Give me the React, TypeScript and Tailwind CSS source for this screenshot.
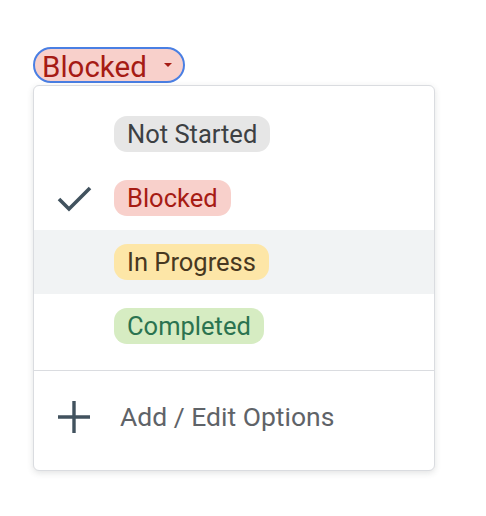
import React from 'react'

const options = [
  { label: 'Not Started', bg: 'bg-[#e6e6e6]', text: 'text-[#3c4043]' },
  { label: 'Blocked', bg: 'bg-[#f8d0cb]', text: 'text-[#a61b14]', checked: true },
  { label: 'In Progress', bg: 'bg-[#fde6a7]', text: 'text-[#473821]', hover: true },
  { label: 'Completed', bg: 'bg-[#d6ecc2]', text: 'text-[#2b7350]' },
]

export default function App() {
  return (
    <div className="min-h-screen bg-white pt-[47px] pl-[33px]" style={{ fontFamily: 'Roboto, "Liberation Sans", sans-serif' }}>
      {/* Trigger chip */}
      <button className="flex h-[36px] w-[152px] items-center rounded-full border-2 border-[#4a7fe3] bg-[#f8d0cb] pl-[7px] text-[29.5px] text-[#a61b14]">
        <span className="pt-[3px] leading-[32px]">Blocked</span>
        <svg className="ml-[16px]" width="10" height="6" viewBox="0 0 10 6">
          <path d="M1 1h8L5 5z" fill="#a61b14" />
        </svg>
      </button>

      {/* Menu */}
      <div className="mt-[2px] w-[402px] rounded-[6px] border border-[#dadce0] bg-white pt-[16px] pb-[21px] shadow-[0_2px_6px_rgba(60,64,67,0.15)]">
        {options.map((o) => (
          <div key={o.label} className={`flex h-[64px] items-center ${o.hover ? 'bg-[#f1f3f4]' : ''}`}>
            <div className="flex w-[80px] justify-center">
              {o.checked && (
                <svg width="36" height="28" viewBox="0 0 36 28">
                  <path d="M3 15l10 10L34 4" fill="none" stroke="#41525e" strokeWidth="3.6" />
                </svg>
              )}
            </div>
            <span className={`inline-flex h-[36px] items-center rounded-[13px] px-[13px] text-[25.5px] ${o.bg} ${o.text}`}>
              {o.label}
            </span>
          </div>
        ))}
        <div className="mt-[12px] border-t border-[#dadce0]" />
        <div className="mt-[14px] flex h-[64px] items-center">
          <div className="flex w-[80px] justify-center">
            <svg width="32" height="32" viewBox="0 0 32 32">
              <path d="M16 0v32M0 16h32" stroke="#41525e" strokeWidth="3.4" />
            </svg>
          </div>
          <span className="ml-[6px] text-[26.5px] text-[#5f6368]">Add / Edit Options</span>
        </div>
      </div>
    </div>
  )
}
